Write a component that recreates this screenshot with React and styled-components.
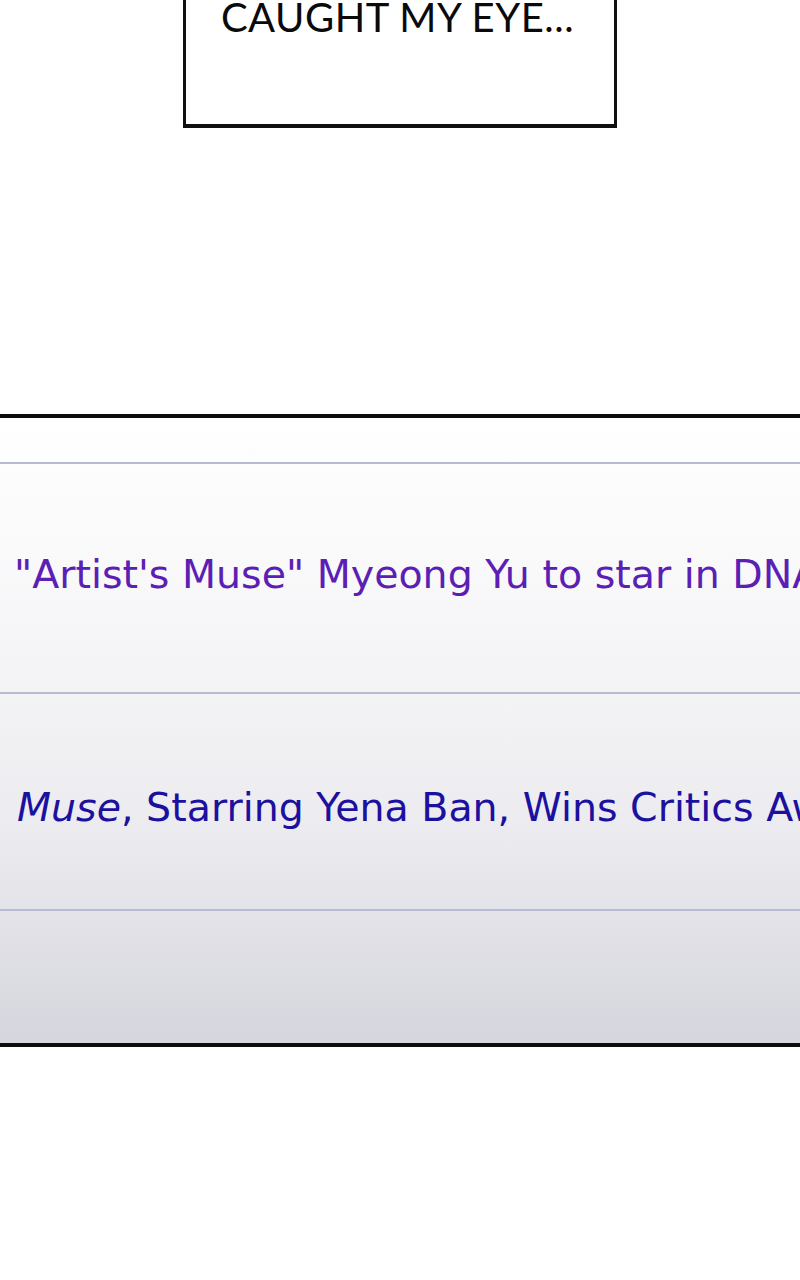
import React from "react";
import styled, { createGlobalStyle } from "styled-components";

const Global = createGlobalStyle`
  html, body { margin: 0; padding: 0; background: #ffffff; }
  body { width: 800px; height: 1280px; overflow: hidden; }
`;

const Page = styled.div`
  width: 800px;
  height: 1280px;
  display: flex;
  flex-direction: column;
  background: #ffffff;
  overflow: hidden;
`;

const Caption = styled.div`
  align-self: center;
  width: 434px;
  height: 128px;
  box-sizing: border-box;
  border: 3px solid #111111;
  border-top: none;
  border-bottom-width: 4px;
  display: flex;
  justify-content: center;
  padding-top: 2px;
  padding-right: 5px;
  font-family: "Lato", "Liberation Sans", sans-serif;
  font-size: 40px;
  line-height: 30px;
  color: #0a0a0a;
  letter-spacing: 0.5px;
`;

const CaptionText = styled.div`
  white-space: nowrap;
`;

const Panel = styled.div`
  margin-top: 286px;
  height: 633px;
  box-sizing: border-box;
  border-top: 4px solid #0c0c0c;
  border-bottom: 4px solid #0c0c0c;
  background: linear-gradient(180deg, #ffffff 0%, #f6f6f8 35%, #ececf0 65%, #d5d5dd 100%);
  display: flex;
  flex-direction: column;
  overflow: hidden;
`;

const Row = styled.div`
  height: ${(p) => p.$h}px;
  flex: none;
  box-sizing: border-box;
  border-bottom: ${(p) => (p.$last ? "none" : "2px solid #b8bcd2")};
  padding-top: ${(p) => p.$pad || 0}px;
  padding-left: ${(p) => p.$left || 0}px;
`;

const Headline = styled.div`
  font-family: "DejaVu Sans", "Noto Sans", sans-serif;
  font-size: 39.5px;
  line-height: 39.5px;
  white-space: nowrap;
  color: ${(p) => p.$color};
`;

export default function App() {
  return (
    <Page>
      <Global />
      <Caption>
        <CaptionText>CAUGHT MY EYE...</CaptionText>
      </Caption>
      <Panel>
        <Row $h={46} />
        <Row $h={230} $pad={91} $left={14}>
          <Headline $color="#5b20b3">"Artist's Muse" Myeong Yu to star in DNA</Headline>
        </Row>
        <Row $h={217} $pad={94} $left={17}>
          <Headline $color="#1c119f">
            <i>Muse</i>, Starring Yena Ban, Wins Critics Award
          </Headline>
        </Row>
        <Row $h={132} $last />
      </Panel>
    </Page>
  );
}
